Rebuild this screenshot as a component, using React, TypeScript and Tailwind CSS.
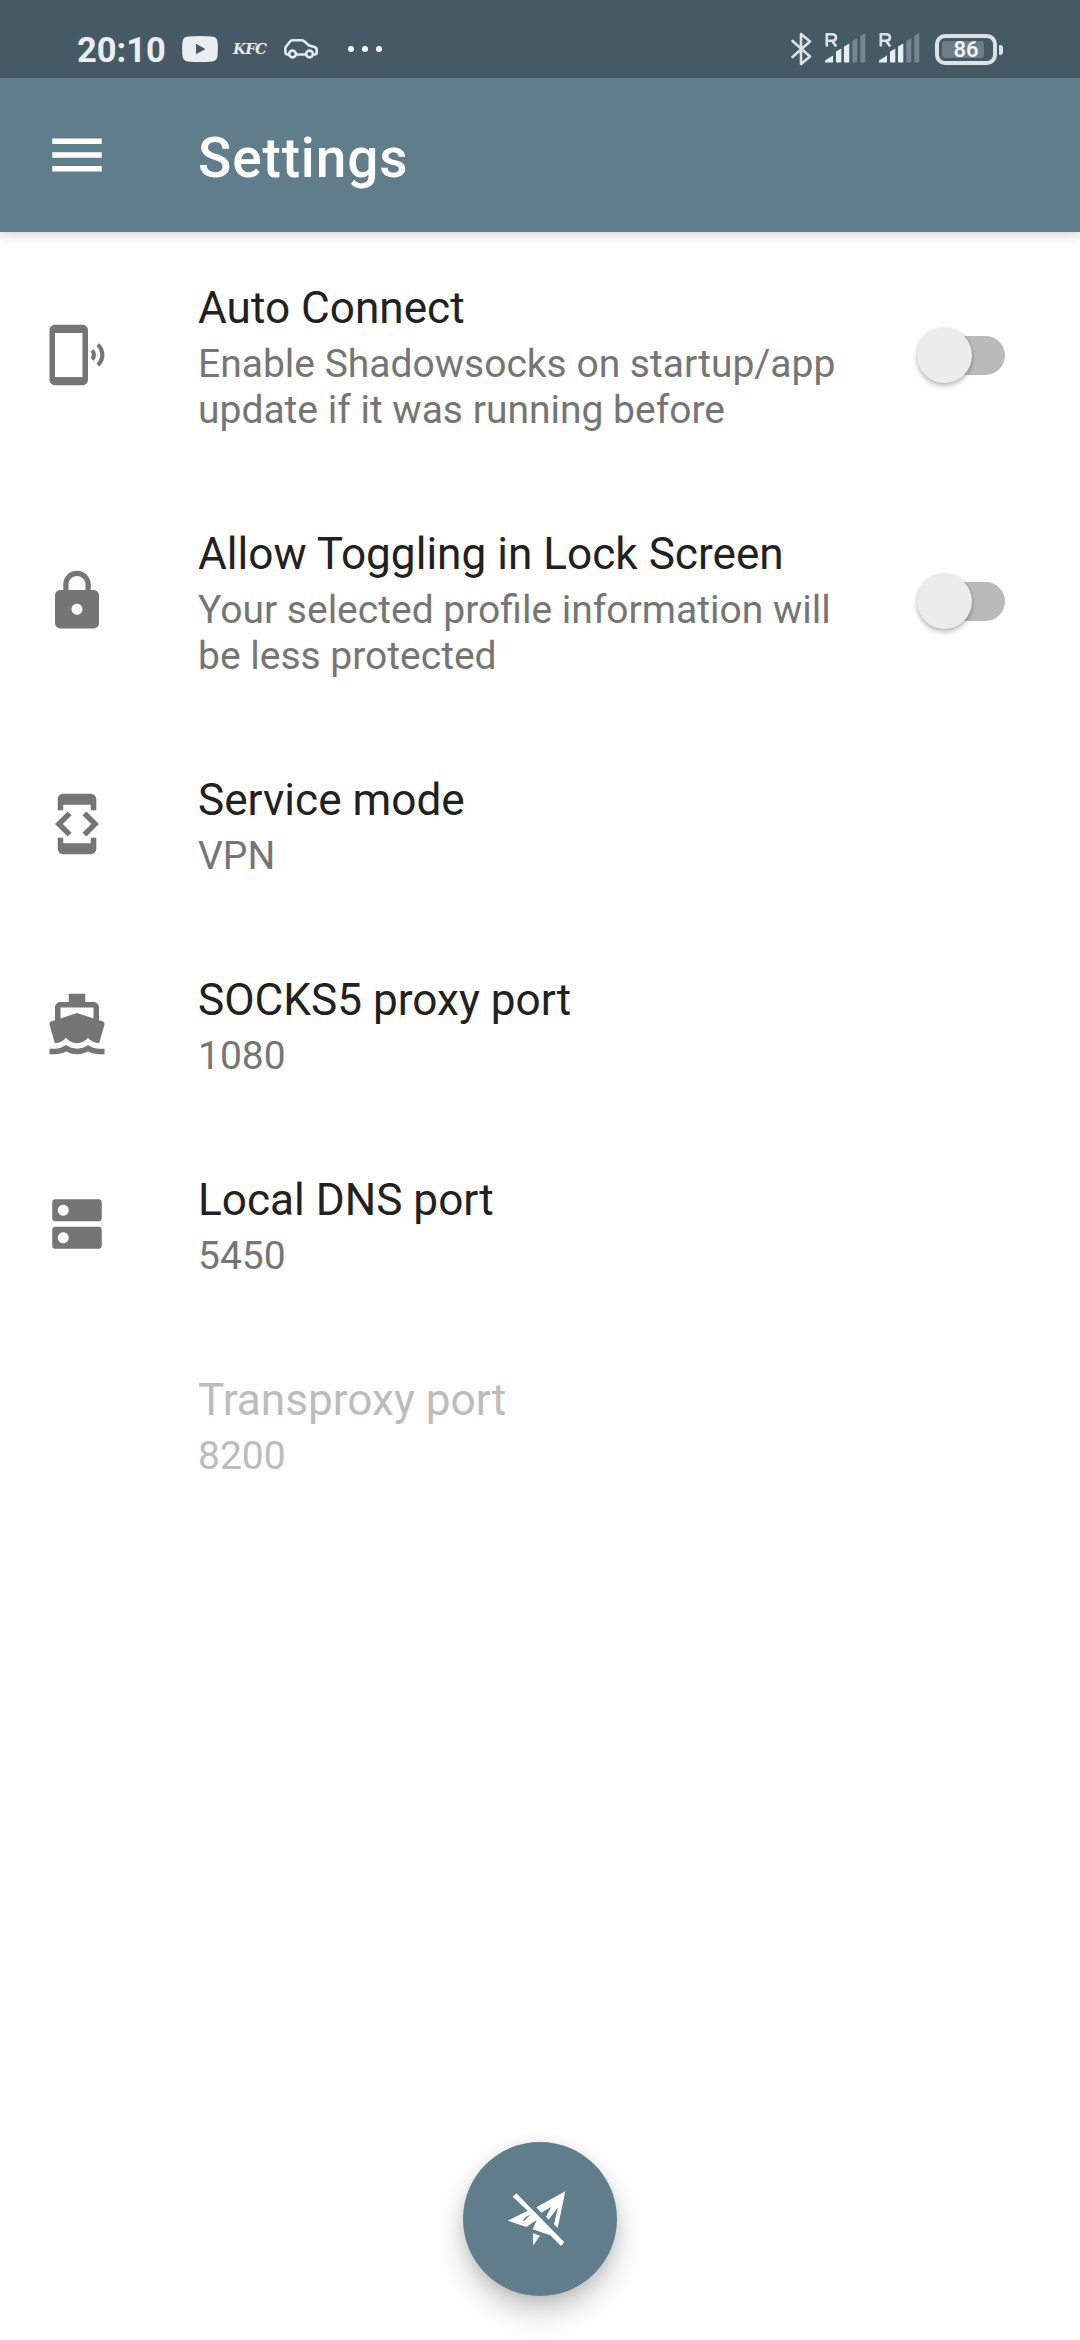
import React from "react";
import type { IconType } from "react-icons";
import {
  MdMenu,
  MdPhonelinkRing,
  MdLock,
  MdDeveloperMode,
  MdDirectionsBoat,
  MdDns,
} from "react-icons/md";

type Preference = {
  title: string;
  summary: string[];
  icon?: IconType;
  toggle?: boolean;
  disabled?: boolean;
};

const preferences: Preference[] = [
  {
    title: "Auto Connect",
    summary: ["Enable Shadowsocks on startup/app", "update if it was running before"],
    icon: MdPhonelinkRing,
    toggle: true,
  },
  {
    title: "Allow Toggling in Lock Screen",
    summary: ["Your selected profile information will", "be less protected"],
    icon: MdLock,
    toggle: true,
  },
  { title: "Service mode", summary: ["VPN"], icon: MdDeveloperMode },
  { title: "SOCKS5 proxy port", summary: ["1080"], icon: MdDirectionsBoat },
  { title: "Local DNS port", summary: ["5450"], icon: MdDns },
  { title: "Transproxy port", summary: ["8200"], disabled: true },
];

function YoutubeIcon() {
  return (
    <svg className="h-[26px] w-[36px]" viewBox="0 0 36 26">
      <path
        fillRule="evenodd"
        fill="#eaeef2"
        d="M6 .6Q18-.4 30 .6Q35 1 35.5 6Q36.200 13 35.500 20Q35 25 30 25.400Q18 26.400 6 25.400Q1 25 .500 20Q-.200 13 .500 6Q1 1 6 .6ZM14 7.800V18.200L23.500 13Z"
      />
    </svg>
  );
}

function CarIcon() {
  return (
    <svg className="h-[20px] w-[34px]" viewBox="0 0 34 20" fill="none" stroke="#e4eaee" strokeWidth="2.600">
      <path
        strokeLinejoin="round"
        d="M4.500 15.500H3Q1.300 15 1.300 12.500V9.500Q1.300 8 2.500 7L6 2.500Q7 1.300 8.500 1.300H17Q19 1.300 20.500 2.500L25 6.500L30.500 8Q32.700 8.800 32.700 11V13.500Q32.700 15.500 30.500 15.500H29.500M12.500 15.500H21.500"
      />
      <circle cx="8.500" cy="15" r="3.400" />
      <circle cx="25.500" cy="15" r="3.400" />
    </svg>
  );
}

function BluetoothIcon() {
  return (
    <svg className="h-[34px] w-[21px]" viewBox="0 0 21 34" fill="none" stroke="#dbe2e6" strokeWidth="2.600" strokeLinejoin="round" strokeLinecap="round">
      <path d="M1.500 9L19 24.500L10 32V2L19 9.500L1.500 25" />
    </svg>
  );
}

function SignalIcon() {
  return (
    <svg className="h-[32px] w-[42px]" viewBox="0 0 42 32">
      <path
        fill="none"
        stroke="#dbe2e6"
        strokeWidth="2.600"
        d="M1.800 14.500V2.300H7Q11 2.300 11 5.500Q11 8.700 7 8.700H1.800M7 8.700L11.200 14.500"
      />
      <g fill="#e6ecf0">
        <path d="M0 30V28.500L8 23.500V30Q8 30.500 7 30.500H1Q0 30.500 0 30Z" />
        <path d="M11 19.500L16.300 16.500V29.500Q16.300 30.500 15.300 30.500H12Q11 30.500 11 29.500Z" />
        <path d="M19 14.500L24.300 11.500V29.500Q24.300 30.500 23.300 30.500H20Q19 30.500 19 29.500Z" />
      </g>
      <g fill="#758790">
        <path d="M27.300 9L32.300 6V29.500Q32.300 30.500 31.300 30.500H28.300Q27.300 30.500 27.300 29.500Z" />
        <path d="M35.300 4L40.300 1V29.500Q40.300 30.500 39.300 30.500H36.300Q35.300 30.500 35.300 29.500Z" />
      </g>
    </svg>
  );
}

function Battery() {
  return (
    <div className="flex items-center gap-[2px]">
      <div className="flex h-[31px] w-[62px] items-center rounded-[10px] border-[4px] border-[#dbe2e6] pl-[3px]">
        <div className="flex h-[17px] w-[42px] items-center justify-center rounded-[3px] bg-[#6b7f89] pl-[6px] text-[22px] leading-none font-semibold text-[#f0f4f7]">
          86
        </div>
      </div>
      <div className="h-[10px] w-[4px] rounded-r-[3px] rounded-l-[1px] bg-[#dbe2e6]" />
    </div>
  );
}

function StatusBar() {
  return (
    <div className="flex h-[78px] shrink-0 items-start justify-between bg-[#465a65] px-[77px]">
      <div className="flex h-[98px] items-center">
        <span className="w-[105px] pt-[1px] text-[34.5px] leading-[40px] font-bold text-[#eaeef2]">
          20:10
        </span>
        <div className="flex items-center">
          <YoutubeIcon />
          <span className="ml-[15px] w-[34px] text-[15px] leading-[20px] font-bold tracking-[-0.9px] text-[#e4eaee] italic [font-family:'DejaVu_Serif',serif]">
            KFC
          </span>
          <span className="ml-[17px]"><CarIcon /></span>
          <span className="ml-[30px] flex gap-[8px]">
            <i className="size-[6px] rounded-full bg-white" />
            <i className="size-[6px] rounded-full bg-white" />
            <i className="size-[6px] rounded-full bg-white" />
          </span>
        </div>
      </div>
      <div className="flex items-start pt-[32px]">
        <BluetoothIcon />
        <span className="ml-[13px]"><SignalIcon /></span>
        <span className="ml-[12px]"><SignalIcon /></span>
        <span className="ml-[14px] pt-[2px]"><Battery /></span>
      </div>
    </div>
  );
}

function Toggle() {
  return (
    <div className="mr-[75px] flex h-[55px] w-[88px] items-center">
      <div className="flex h-[39px] w-[88px] items-center rounded-full bg-linear-to-r from-transparent from-30% to-[#bababa] to-30%">
        <div className="size-[55px] rounded-full bg-[#ececec] shadow-[0_3px_5px_rgba(0,0,0,0.24),0_0_3px_rgba(0,0,0,0.12)]" />
      </div>
    </div>
  );
}

function Row({ title, summary, icon: Icon, toggle, disabled }: Preference) {
  return (
    <div className="flex items-center pl-[44px]">
      <div className="w-[154px] shrink-0 text-[#757575]">{Icon && <Icon className="size-[66px]" />}</div>
      <div className="flex-1 pt-[45px] pb-[45px]">
        <div className={disabled ? "pb-[2px] text-[44.15px] leading-[62px] text-[#bcbcbc]" : "pb-[2px] text-[44.15px] leading-[62px] text-[#212121]"}>
          {title}
        </div>
        <div className={disabled ? "text-[39px] leading-[46px] text-[#bcbcbc]" : "text-[39px] leading-[46px] text-[#757575]"}>
          {summary.map((line) => (
            <div key={line} className="whitespace-nowrap">{line}</div>
          ))}
        </div>
      </div>
      {toggle && <Toggle />}
    </div>
  );
}

function ServiceStoppedIcon() {
  return (
    <svg className="h-[66px] w-[66px]" viewBox="201 200 198 198" fill="#fff">
      <path d="M376 216L353 326L342 315L354 264L326 301L318 292L334 262L304 280L289 264Z" />
      <path d="M229 222L373 369L363 380L331 348L278 330L290 302L259 323L203 304L263 274L218 232ZM276 287Q258 286 248 306L256 303Q264 289 276 287Z" fillRule="evenodd" />
      <path d="M279 342L300 349L279 379Z" />
    </svg>
  );
}

export default function App() {
  return (
    <div className="flex h-[2340px] w-[1080px] flex-col overflow-hidden bg-[#fefefe] [font-family:Roboto,sans-serif]">
      <StatusBar />
      <header className="flex h-[154px] shrink-0 items-center bg-[#607d8b] pl-[44px] text-white shadow-[0_3px_10px_rgba(0,0,0,0.16)]">
        <MdMenu className="size-[66px]" />
        <h1 className="ml-[88px] pt-[5px] text-[55px] leading-[64px] font-medium tracking-[0.85px]">Settings</h1>
      </header>
      <main className="flex-1">
        {preferences.map((p) => (
          <Row key={p.title} {...p} />
        ))}
      </main>
      <div className="flex justify-center pb-[44px]">
        <button className="flex size-[154px] items-center justify-center rounded-full bg-[#607d8b] shadow-[0_16px_28px_rgba(0,0,0,0.2),0_3px_14px_rgba(0,0,0,0.1)]">
          <ServiceStoppedIcon />
        </button>
      </div>
    </div>
  );
}
